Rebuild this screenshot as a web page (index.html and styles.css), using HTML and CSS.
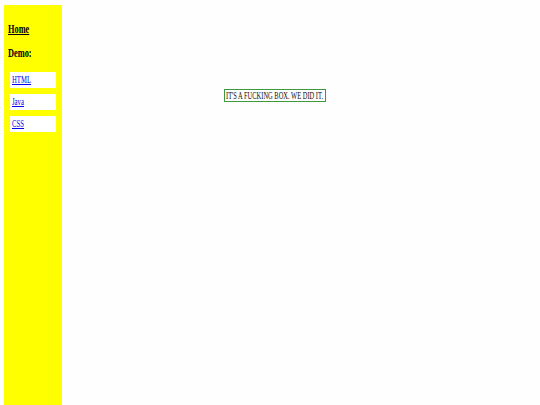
FILE: index.html
```html
<!DOCTYPE html>
<html>
<head>
<meta charset="utf-8">
<link rel="stylesheet" href="styles.css">
</head>
<body>
<div class="page">
  <nav class="sidebar">
    <h2 class="nav-home"><a href="#"><span class="sq">Home</span></a></h2>
    <h2 class="nav-title"><span class="sq">Demo:</span></h2>
    <ul class="demo-list">
      <li><a href="#"><span class="sq">HTML</span></a></li>
      <li><a href="#"><span class="sq">Java</span></a></li>
      <li><a href="#"><span class="sq">CSS</span></a></li>
    </ul>
  </nav>
  <main class="content">
    <div class="box"><span class="sq sq-box">IT'S A FUCKING BOX. WE DID IT.</span></div>
  </main>
</div>
</body>
</html>
```

FILE: styles.css
```css
html, body {
  margin: 0;
  padding: 0;
  background: #fefefe;
}
body {
  font-family: "Liberation Serif", "Times New Roman", serif;
  color: #000;
}
.page {
  display: flex;
  height: 405px;
  padding: 5px 0 0 4px;
  box-sizing: border-box;
}
.sidebar {
  width: 58px;
  flex: none;
  background: #ffff00;
  padding: 17px 0 0 4px;
  box-sizing: border-box;
}
.sq {
  display: inline-block;
  transform: scaleX(0.64);
  transform-origin: 0 50%;
  white-space: nowrap;
}
.sq-box {
  transform: scaleX(0.615);
}
.nav-home, .nav-title {
  margin: 0;
  font-size: 13px;
  line-height: 14px;
  font-weight: bold;
}
.nav-home a, .nav-home a .sq {
  color: #000;
  text-decoration: underline;
}
.nav-title {
  margin-top: 10px;
}
.demo-list {
  list-style: none;
  margin: 12px 0 0 2px;
  padding: 0;
  display: flex;
  flex-direction: column;
  gap: 6px;
}
.demo-list li {
  width: 46px;
  height: 16px;
  background: #fff;
  box-sizing: border-box;
  padding: 2px 0 0 2px;
  font-size: 10.5px;
  line-height: 12px;
}
.demo-list a, .demo-list a .sq {
  color: #0000ee;
  text-decoration: underline;
}
.content {
  flex: 1;
  padding: 84px 0 0 162px;
}
.box {
  width: 102px;
  height: 13px;
  box-sizing: border-box;
  border: 1px solid #3c9a3c;
  font-size: 10.5px;
  line-height: 11px;
  padding-left: 1px;
  color: #111;
}
```
